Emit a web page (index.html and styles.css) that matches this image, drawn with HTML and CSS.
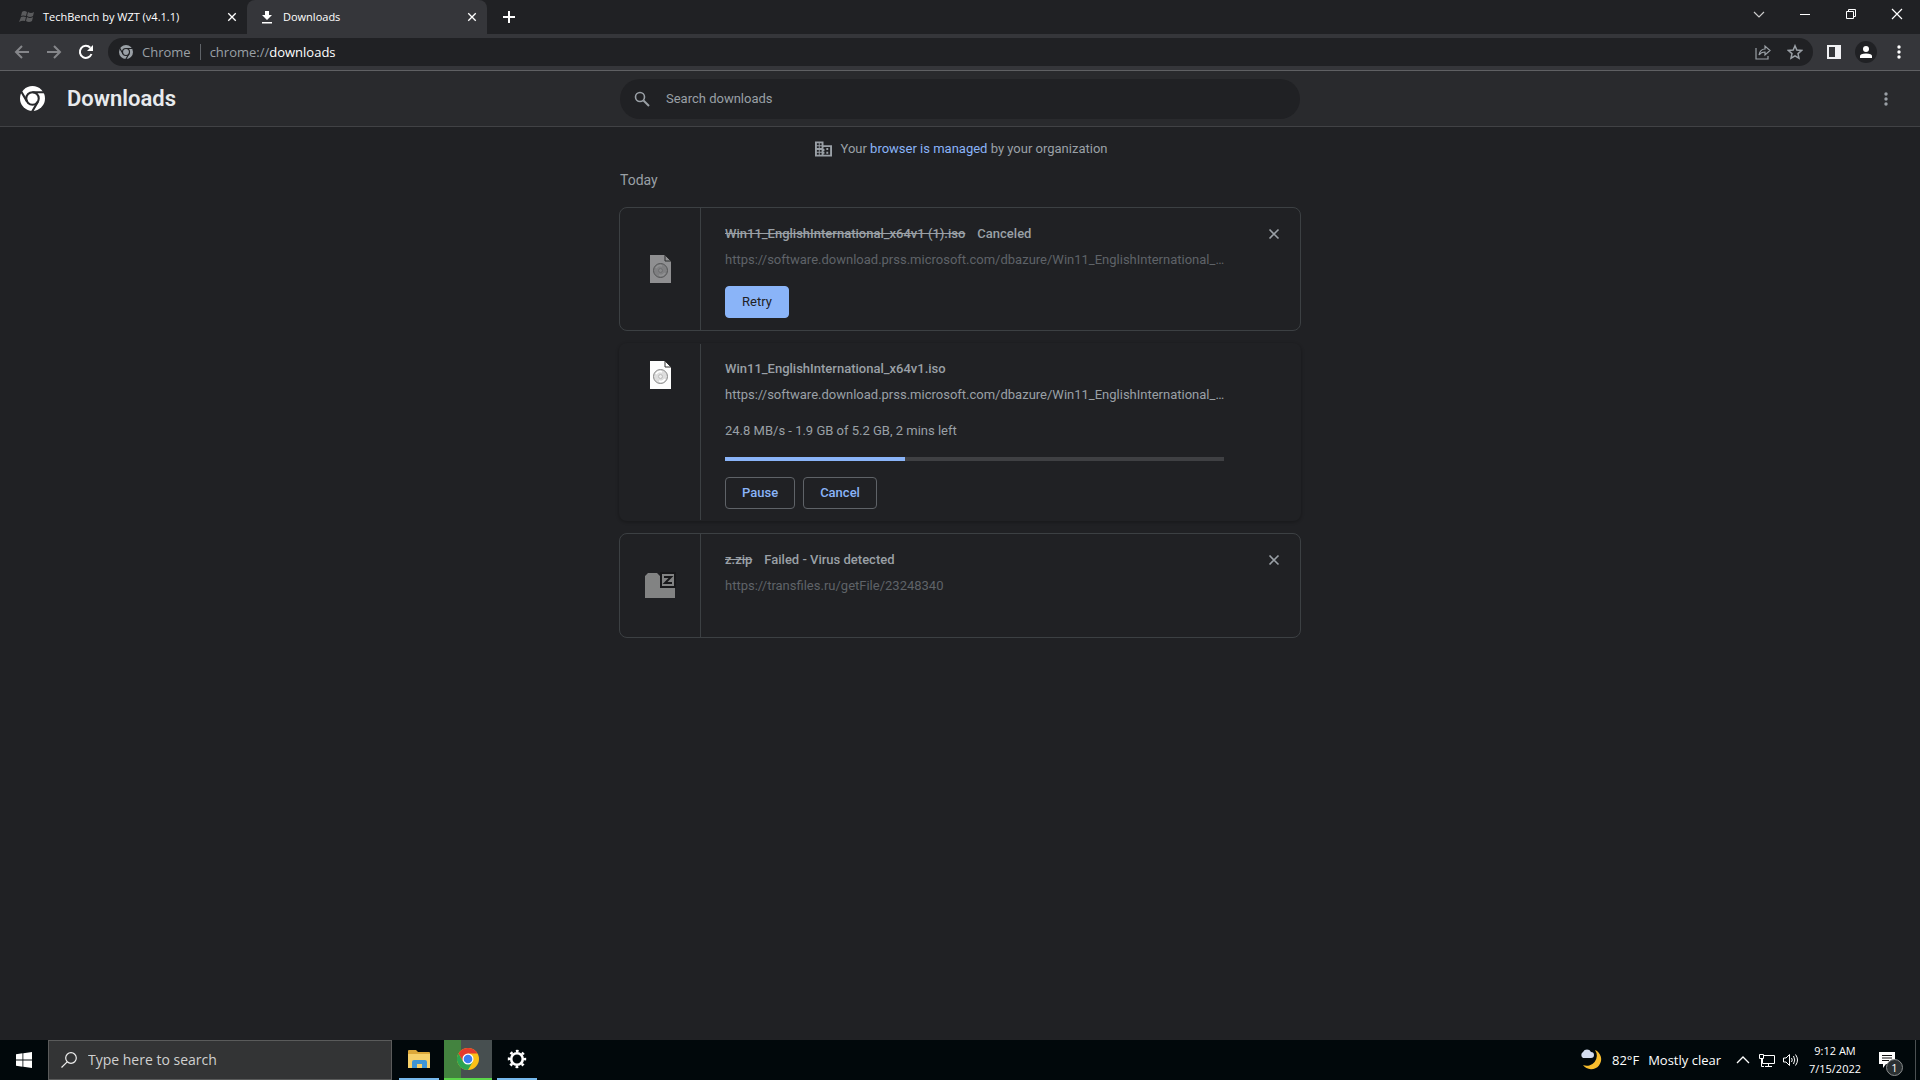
FILE: index.html
```html
<!DOCTYPE html>
<html lang="en">
<head>
    <meta charset="UTF-8">
    <meta name="viewport" content="width=device-width, initial-scale=1.0">
    <title>Downloads</title>
    <link rel="stylesheet" href="styles.css">
</head>
<body>
    <!-- shared icons -->
    <svg class="sprites" aria-hidden="true">
        <symbol id="chrome-mono" viewBox="0 0 24 24">
            <circle cx="12" cy="12" r="12" fill="currentColor"/>
            <circle cx="12" cy="12" r="6" fill="none" stroke="var(--cut)" stroke-width="2"/>
            <path d="M12 6H23M6.800 15L1.300 5.500M17.200 15L11.700 24.500" fill="none" stroke="var(--cut)" stroke-width="2"/>
        </symbol>
        <symbol id="cross" viewBox="0 0 12 12">
            <path d="M1.500 1.500L10.500 10.500M10.500 1.500L1.500 10.500" fill="none" stroke="currentColor" stroke-width="1.600"/>
        </symbol>
        <symbol id="dots" viewBox="0 0 4 16">
            <circle cx="2" cy="3" r="1.700" fill="currentColor"/>
            <circle cx="2" cy="8" r="1.700" fill="currentColor"/>
            <circle cx="2" cy="13" r="1.700" fill="currentColor"/>
        </symbol>
        <symbol id="iso" viewBox="0 0 32 32">
            <path d="M6 2H21L27 8V30H6Z" fill="#fdfdfd"/>
            <path d="M21 2V8H27Z" fill="#fff" stroke="#333" stroke-width="1"/>
            <circle cx="16.500" cy="17.500" r="7" fill="#ddd" stroke="#888" stroke-width="1"/>
            <path d="M12 15A5 5 0 0 1 18 13M21 20A5 5 0 0 1 15 22" fill="none" stroke="#fff" stroke-width="1.500"/>
            <circle cx="16.500" cy="17.500" r="2" fill="#eee" stroke="#bbb" stroke-width="1"/>
        </symbol>
    </svg>

    <div class="tabstrip">
        <div class="tab">
            <svg class="favicon" viewBox="0 0 16 16"><path d="M3 3Q5 1 8 3L7 7Q4 6 2 7ZM9 3Q12 5 15 3L14 7Q11 9 8 7ZM2 8Q4 7 7 8L6 12Q3 11 0 13ZM8 8Q11 10 14 8L13 12Q10 14 7 12Z" fill="#5a5b5d"/></svg>
            <span class="tab-title">TechBench by WZT (v4.1.1)</span>
            <button class="tab-close" aria-label="Close tab"><svg viewBox="0 0 12 12"><use href="#cross"/></svg></button>
        </div>
        <div class="tab active">
            <svg class="favicon" viewBox="0 0 16 16"><path d="M6 2H10V6H13L8 11L3 6H6ZM3 13H13V14.500H3Z" fill="#fff"/></svg>
            <span class="tab-title">Downloads</span>
            <button class="tab-close" aria-label="Close tab"><svg viewBox="0 0 12 12"><use href="#cross"/></svg></button>
        </div>
        <button class="new-tab" aria-label="New tab"><svg viewBox="0 0 12 12"><path d="M6 0V12M0 6H12" stroke="#fff" stroke-width="2"/></svg></button>
        <div class="window-buttons">
            <button aria-label="Search tabs"><svg viewBox="0 0 12 12"><path d="M1 4L6 9L11 4" fill="none" stroke="#ccc" stroke-width="1.200"/></svg></button>
            <button aria-label="Minimize"><svg viewBox="0 0 12 12"><path d="M1 6.500H11" stroke="#fff"/></svg></button>
            <button aria-label="Restore"><svg viewBox="0 0 12 12"><path d="M1.500 3.500H8.500V10.500H1.500ZM3.500 3.500V1.500H10.500V8.500H8.500" fill="none" stroke="#fff"/></svg></button>
            <button aria-label="Close"><svg viewBox="0 0 12 12"><path d="M1 1L11 11M11 1L1 11" stroke="#fff" stroke-width="1.200"/></svg></button>
        </div>
    </div>

    <div class="toolbar">
        <button class="nav-button dim" aria-label="Back"><svg viewBox="0 0 16 16"><path d="M15 8H2M8 2L2 8L8 14" fill="none" stroke="currentColor" stroke-width="2"/></svg></button>
        <button class="nav-button dim" aria-label="Forward"><svg viewBox="0 0 16 16"><path d="M1 8H14M8 2L14 8L8 14" fill="none" stroke="currentColor" stroke-width="2"/></svg></button>
        <button class="nav-button" aria-label="Reload"><svg viewBox="0 0 16 16"><path d="M13.500 10A6 6 0 1 1 12.300 3.800" fill="none" stroke="currentColor" stroke-width="2"/><path d="M15 1V7H9Z" fill="currentColor"/></svg></button>
        <div class="omnibox">
            <svg class="site-icon" viewBox="0 0 24 24"><use href="#chrome-mono"/></svg>
            <span class="site-name">Chrome</span>
            <span class="address">chrome://<b>downloads</b></span>
            <button aria-label="Share"><svg viewBox="0 0 16 16"><path d="M1 4V15H13V12M4 11Q5 5 10 5V2L15 6.500L10 11V8Q6 8 4 11Z" fill="none" stroke="currentColor" stroke-width="1.200"/></svg></button>
            <button aria-label="Bookmark"><svg viewBox="0 0 16 16"><path d="M8 1.800L9.800 6.100L14.500 6.500L11 9.600L12 14.200L8 11.800L4 14.200L5 9.600L1.500 6.500L6.200 6.100Z" fill="none" stroke="currentColor" stroke-width="1.500"/></svg></button>
        </div>
        <button class="side-panel" aria-label="Side panel"><svg viewBox="0 0 14 14"><path d="M0 0H14V14H0ZM2 2V12H8V2Z" fill="#f1f1f4" fill-rule="evenodd"/></svg></button>
        <button class="profile" aria-label="Profile"><svg viewBox="0 0 14 14"><circle cx="7" cy="4" r="3" fill="#fff"/><path d="M1 13V11Q1 8.500 7 8.500T13 11V13Z" fill="#fff"/></svg></button>
        <button class="more" aria-label="Menu"><svg viewBox="0 0 4 16"><use href="#dots"/></svg></button>
    </div>

    <header class="page-header">
        <div class="brand">
            <svg class="logo" viewBox="0 0 24 24"><use href="#chrome-mono"/></svg>
            <h1>Downloads</h1>
        </div>
        <label class="search">
            <svg viewBox="0 0 16 16"><circle cx="6" cy="6" r="4.500" fill="none" stroke="currentColor" stroke-width="1.600"/><path d="M9.500 9.500L15 15" stroke="currentColor" stroke-width="2"/></svg>
            <input type="search" placeholder="Search downloads" aria-label="Search downloads">
        </label>
        <button class="more" aria-label="More actions"><svg viewBox="0 0 4 16"><use href="#dots"/></svg></button>
    </header>

    <main>
        <p class="managed">
            <svg viewBox="0 0 18 16"><path d="M0 0H9V4H18V16H0ZM2 2V4H4V2ZM5 2V4H7V2ZM2 5V7H4V5ZM5 5V7H7V5ZM2 9V11H4V9ZM5 9V11H7V9ZM2 12V14H4V12ZM5 12V14H7V12ZM9 6V8H10V10H9V11H10V13H9V14H16V6ZM12 7H14V9H12ZM12 11H14V13H12Z" fill="currentColor" fill-rule="evenodd"/></svg>
            <span>Your <a href="#">browser is managed</a> by your organization</span>
        </p>
        <h2>Today</h2>

        <article class="card inactive">
            <div class="file-icon"><svg viewBox="0 0 32 32"><use href="#iso"/></svg></div>
            <div class="details">
                <div class="title"><s>Win11_EnglishInternational_x64v1 (1).iso</s><span>Canceled</span></div>
                <div class="url">https://software.download.prss.microsoft.com/dbazure/Win11_EnglishInternational_…</div>
                <div class="actions"><button class="primary">Retry</button></div>
            </div>
            <button class="remove" aria-label="Remove from list"><svg viewBox="0 0 12 12"><use href="#cross"/></svg></button>
        </article>

        <article class="card running">
            <div class="file-icon"><svg viewBox="0 0 32 32"><use href="#iso"/></svg></div>
            <div class="details">
                <div class="title"><span>Win11_EnglishInternational_x64v1.iso</span></div>
                <a class="url" href="#">https://software.download.prss.microsoft.com/dbazure/Win11_EnglishInternational_…</a>
                <div class="status">24.8 MB/s - 1.9 GB of 5.2 GB, 2 mins left</div>
                <div class="progress"><div class="bar" style="width: 36%"></div></div>
                <div class="actions"><button>Pause</button><button>Cancel</button></div>
            </div>
        </article>

        <article class="card inactive">
            <div class="file-icon"><svg viewBox="0 0 32 32"><path d="M1 28V6L4 3H13L16 6H31V28Z" fill="#e4e4e2"/><path d="M17 3H31V17H17Z" fill="#e4e4e2" stroke="#111" stroke-width="2"/><path d="M20 7H27L21 13H28" fill="none" stroke="#111" stroke-width="2"/></svg></div>
            <div class="details">
                <div class="title"><s>z.zip</s><span>Failed - Virus detected</span></div>
                <div class="url">https://transfiles.ru/getFile/23248340</div>
            </div>
            <button class="remove" aria-label="Remove from list"><svg viewBox="0 0 12 12"><use href="#cross"/></svg></button>
        </article>
    </main>

    <footer class="taskbar">
        <button class="start" aria-label="Start"><svg viewBox="0 0 16 16"><path d="M0 2.200L6.500 1.300V7.600H0ZM7.300 1.200L16 0V7.600H7.300ZM0 8.400H6.500V14.700L0 13.800ZM7.300 8.400H16V16L7.300 14.800Z" fill="#fff"/></svg></button>
        <label class="task-search">
            <svg viewBox="0 0 16 16"><circle cx="10" cy="6" r="5.300" fill="none" stroke="#eee" stroke-width="1.200"/><path d="M6.200 9.800L0.500 15.500" stroke="#eee" stroke-width="1.200"/></svg>
            <input type="text" placeholder="Type here to search" aria-label="Type here to search">
        </label>
        <div class="apps">
            <button class="app" aria-label="File Explorer"><svg viewBox="0 0 22 22"><path d="M0 3Q0 2 1 2H8L10 4H21Q22 4 22 5V20H0Z" fill="#dca83a"/><path d="M0 6H22V20H0Z" fill="#f6d06a"/><path d="M4 20V14Q4 12 6 12H17Q19 12 19 14V20H14V16H9V20Z" fill="#3e95d6"/></svg></button>
            <button class="app current" aria-label="Chrome"><svg viewBox="0 0 24 24"><circle cx="12" cy="12" r="12" fill="#fbc116"/><path d="M1.600 6A12 12 0 0 1 22.400 6H12L6.800 15Z" fill="#e33b2e"/><path d="M1.600 6A12 12 0 0 0 12 24L17.200 15H6.800Z" fill="#2da44f"/><circle cx="12" cy="12" r="6" fill="#fff"/><circle cx="12" cy="12" r="4.700" fill="#3b7ded"/></svg></button>
            <button class="app" aria-label="Settings"><svg viewBox="0 0 22 22"><circle cx="11" cy="11" r="5.800" fill="none" stroke="#fff" stroke-width="2.600"/><circle cx="11" cy="11" r="8" fill="none" stroke="#fff" stroke-width="2.400" stroke-dasharray="2.800 3.483" stroke-dashoffset="1.400"/></svg></button>
        </div>
        <div class="tray">
            <button class="weather">
                <svg viewBox="0 0 24 24"><path d="M16 2A10 10 0 1 1 4 17A10 10 0 0 0 16 2Z" fill="#f8bd2d"/><path d="M4 10A3.500 3.500 0 0 1 4 4A4.500 4.500 0 0 1 12 4A3 3 0 0 1 12 10Z" fill="#d3dcef"/></svg>
                <span>82°F</span><span>Mostly clear</span>
            </button>
            <button aria-label="Show hidden icons"><svg viewBox="0 0 16 16"><path d="M2 11L8 5L14 11" fill="none" stroke="#fff" stroke-width="1.300"/></svg></button>
            <button aria-label="Network"><svg viewBox="0 0 16 16"><path d="M5 3.500H15.500V11.500H3.500V7M9.500 11.500V14M6 14.500H13M0.500 2.500H4.500V6.500H0.500ZM2.500 6.500V14.500H5" fill="none" stroke="#fff"/></svg></button>
            <button aria-label="Volume"><svg viewBox="0 0 16 16"><path d="M0.500 6H3L6.500 2.500V13.500L3 10H0.500ZM8.500 6Q10 8 8.500 10M10.500 4Q13 8 10.500 12M12.500 2.500Q16.500 8 12.500 13.500" fill="none" stroke="#fff"/></svg></button>
            <div class="clock"><time>9:12 AM</time><time>7/15/2022</time></div>
            <button class="notifications" aria-label="Notifications">
                <svg viewBox="0 0 16 16"><path d="M0 0H16V12H7L4 16V12H0Z" fill="#fff"/><path d="M3 3.500H13M3 6H13M3 8.500H10" stroke="#111"/></svg>
                <span class="badge">1</span>
            </button>
        </div>
    </footer>
</body>
</html>
```

FILE: styles.css
```css
* {
    box-sizing: border-box;
}

body {
    margin: 0;
    min-height: 100vh;
    display: flex;
    flex-direction: column;
    background-color: #202124;
    color: #9aa0a6;
    font-family: Roboto, sans-serif;
    font-size: 13px;
    line-height: 20px;
}

button {
    display: flex;
    align-items: center;
    justify-content: center;
    padding: 0;
    border: none;
    background: none;
    color: inherit;
    font: inherit;
}

input {
    flex: 1;
    min-width: 0;
    padding: 0;
    border: none;
    outline: none;
    background: none;
    color: inherit;
    font: inherit;
}

input::placeholder {
    color: inherit;
    opacity: 1;
}

a {
    color: #8ab4f8;
    text-decoration: none;
}

svg {
    display: block;
    flex-shrink: 0;
}

.sprites {
    position: absolute;
    width: 0;
    height: 0;
}

/* tabs */
.tabstrip {
    display: flex;
    height: 34px;
    padding-left: 7px;
    color: #fff;
    font-family: "Open Sans", sans-serif;
    font-size: 11px;
}

.tab {
    display: flex;
    align-items: center;
    width: 240px;
    padding: 0 10px 0 12px;
}

.tab.active {
    background-color: #35363a;
    border-radius: 8px 8px 0 0;
}

.favicon {
    width: 16px;
    height: 16px;
    margin-right: 8px;
}

.tab-title {
    flex: 1;
}

.tab-close svg {
    width: 10px;
    height: 10px;
}

.new-tab {
    width: 44px;
}

.new-tab svg {
    width: 12px;
    height: 12px;
}

.window-buttons {
    display: flex;
    margin-left: auto;
    height: 28px;
}

.window-buttons button {
    width: 46px;
}

.window-buttons svg {
    width: 12px;
    height: 12px;
}

/* toolbar */
.toolbar {
    display: flex;
    align-items: center;
    height: 37px;
    padding: 0 11px 0 6px;
    background-color: #35363a;
    border-bottom: 1px solid #5f6063;
    color: #fff;
}

.nav-button {
    width: 32px;
    height: 28px;
}

.nav-button svg {
    width: 16px;
    height: 16px;
}

.dim {
    color: #85868a;
}

.omnibox {
    flex: 1;
    display: flex;
    align-items: center;
    height: 28px;
    margin-left: 6px;
    padding: 0 2px 0 11px;
    border-radius: 14px;
    background-color: #202124;
    color: #9aa0a6;
    font-family: "Open Sans", sans-serif;
}

.omnibox button {
    width: 32px;
}

.omnibox button svg {
    width: 16px;
    height: 16px;
}

.site-icon {
    --cut: #202124;
    width: 14px;
    height: 14px;
    margin-right: 9px;
}

.site-name {
    padding-right: 9px;
    margin-right: 9px;
    border-right: 1px solid #5f6368;
    line-height: 16px;
}

.address {
    flex: 1;
}

.address b {
    color: #fff;
    font-weight: 400;
}

.side-panel {
    width: 42px;
}

.side-panel svg {
    width: 14px;
    height: 14px;
}

.profile {
    width: 22px;
    height: 22px;
    border-radius: 50%;
    background-color: #202124;
}

.profile svg {
    width: 14px;
    height: 14px;
}

.more {
    width: 20px;
}

.more svg {
    width: 4px;
    height: 16px;
}

.toolbar .more {
    margin-left: 12px;
}

/* page header */
.page-header {
    display: grid;
    grid-template-columns: 1fr 680px 1fr;
    align-items: center;
    height: 56px;
    padding: 0 20px;
    background-color: #292a2d;
    border-bottom: 1px solid #414245;
}

.brand {
    display: flex;
    align-items: center;
    gap: 22px;
}

.logo {
    --cut: #292a2d;
    width: 25px;
    height: 25px;
    color: #fff;
}

h1 {
    margin: 0;
    color: #e8eaed;
    font-size: 22px;
    font-weight: 600;
}

.search {
    display: flex;
    align-items: center;
    gap: 16px;
    height: 40px;
    padding: 0 14px;
    border-radius: 20px;
    background-color: #202124;
}

.search svg {
    width: 16px;
    height: 16px;
}

.page-header .more {
    justify-self: end;
    width: 28px;
}

/* downloads list */
main {
    flex: 1;
    width: 682px;
    max-width: 100%;
    margin: 0 auto;
    padding-top: 12px;
}

.managed {
    display: flex;
    justify-content: center;
    gap: 9px;
    margin: 0;
    padding-left: 2px;
}

.managed svg {
    width: 17px;
    height: 16px;
    margin-top: 2px;
}

h2 {
    margin: 11px 1px 17px 1px;
    font-size: 14px;
    font-weight: 400;
}

.card {
    display: flex;
    min-height: 105px;
    margin-bottom: 12px;
    border: 1px solid #3c4043;
    border-radius: 8px;
}

.running {
    border-color: transparent;
    box-shadow: 0 1px 3px 1px rgba(0, 0, 0, 0.2);
}

.file-icon {
    display: flex;
    align-items: center;
    justify-content: center;
    width: 81px;
    border-right: 1px solid #3c4043;
}

.file-icon svg {
    width: 32px;
    height: 32px;
}

.running .file-icon {
    align-items: flex-start;
    padding-top: 15px;
}

.inactive .file-icon svg {
    opacity: 0.5;
}

.details {
    width: 523px;
    padding: 15px 0 11px 24px;
}

.inactive .details {
    padding-top: 16px;
}

.title {
    display: flex;
    gap: 12px;
    margin-bottom: 6px;
    font-weight: 500;
}

.url {
    display: block;
    color: #9aa0a6;
    white-space: nowrap;
}

.inactive .url {
    color: #5f6368;
}

.status {
    margin-top: 16px;
}

.progress {
    height: 4px;
    margin: 16px 0;
    background-color: #3f4043;
}

.bar {
    height: 4px;
    background-color: #8ab4f8;
}

.actions {
    display: flex;
    gap: 8px;
}

.actions button {
    height: 32px;
    padding: 0 16px;
    border: 1px solid #5f6368;
    border-radius: 4px;
    color: #8ab4f8;
    font-weight: 500;
}

.url + .actions {
    margin-top: 16px;
    margin-bottom: 1px;
}

.actions .primary {
    border-color: #8ab4f8;
    background-color: #8ab4f8;
    color: #202124;
    font-weight: 400;
}

.remove {
    width: 24px;
    height: 24px;
    margin: 14px 14px 0 auto;
}

.remove svg {
    width: 12px;
    height: 12px;
}

/* taskbar */
.taskbar {
    display: flex;
    height: 40px;
    background-color: #01080b;
    color: #fff;
    font-family: "Open Sans", sans-serif;
}

.start {
    width: 48px;
}

.start svg {
    width: 16px;
    height: 16px;
}

.task-search {
    display: flex;
    align-items: center;
    gap: 11px;
    width: 344px;
    padding: 0 12px;
    border: 1px solid #5a5b5b;
    background-color: #333435;
    color: #d0d0d0;
    font-size: 14px;
}

.task-search svg {
    width: 16px;
    height: 16px;
}

.apps {
    display: flex;
    gap: 5px;
    margin-left: 7px;
}

.app {
    width: 40px;
    border-bottom: 2px solid #76b9ed;
}

.app svg {
    width: 22px;
    height: 22px;
}

.app.current {
    width: 48px;
    border-bottom-color: #5bd64a;
    background: linear-gradient(to right, #43833f 17px, #474f50 17px);
}

.tray {
    display: flex;
    align-items: center;
    margin-left: auto;
    padding-right: 4px;
}

.tray svg {
    width: 16px;
    height: 16px;
}

.tray button {
    width: 24px;
    height: 40px;
}

.tray .weather {
    width: auto;
    gap: 9px;
    margin-right: 10px;
}

.tray .weather svg {
    width: 24px;
    height: 24px;
}

.clock {
    display: flex;
    flex-direction: column;
    width: 64px;
    font-size: 11px;
    line-height: 18px;
    text-align: center;
}

.tray .notifications {
    position: relative;
    justify-content: flex-start;
    width: 49px;
    padding-left: 12px;
    border-right: 1px solid #4b5052;
}

.badge {
    position: absolute;
    right: 12px;
    bottom: 4px;
    width: 17px;
    height: 17px;
    border: 1px solid #8a8d8e;
    border-radius: 50%;
    background-color: #2a3032;
    font-size: 11px;
    line-height: 15px;
}
```
